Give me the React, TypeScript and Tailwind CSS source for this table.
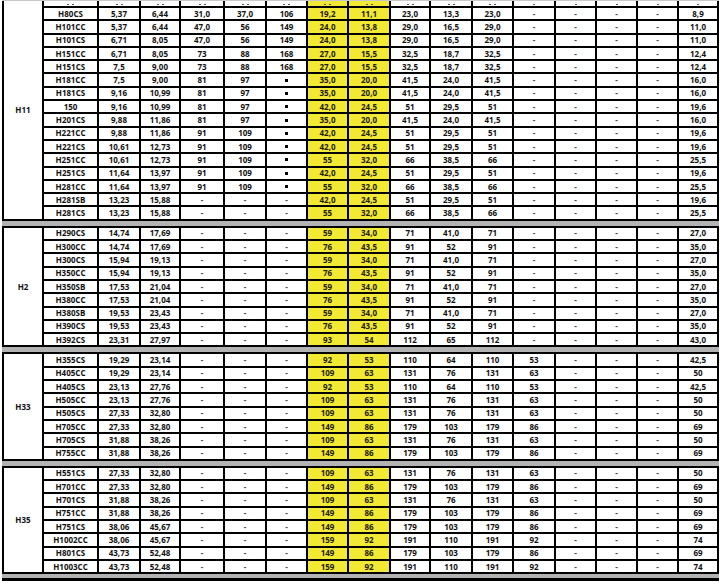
import React from 'react';

// cell widths of the data columns (model first), group column is 38px
const colW = [
  'w-[53px]', 'w-[40px]', 'w-[38px]', 'w-[42px]', 'w-[40px]', 'w-[39px]', 'w-[39px]', 'w-[40px]',
  'w-[38px]', 'w-[40px]', 'w-[39px]', 'w-[40px]', 'w-[39px]', 'w-[39px]', 'w-[39px]', 'w-[38px]',
];

type Row = string[];

const r = (s: string): Row => s.split(' ');

const sections: { name: string; rows: Row[] }[] = [
  {
    name: 'H11',
    rows: [
      r('H80CS 5,37 6,44 31,0 37,0 106 19,2 11,1 23,0 13,3 23,0 - - - - 8,9'),
      r('H101CC 5,37 6,44 47,0 56 149 24,0 13,8 29,0 16,5 29,0 - - - - 11,0'),
      r('H101CS 6,71 8,05 47,0 56 149 24,0 13,8 29,0 16,5 29,0 - - - - 11,0'),
      r('H151CC 6,71 8,05 73 88 168 27,0 15,5 32,5 18,7 32,5 - - - - 12,4'),
      r('H151CS 7,5 9,00 73 88 168 27,0 15,5 32,5 18,7 32,5 - - - - 12,4'),
      r('H181CC 7,5 9,00 81 97 = 35,0 20,0 41,5 24,0 41,5 - - - - 16,0'),
      r('H181CS 9,16 10,99 81 97 = 35,0 20,0 41,5 24,0 41,5 - - - - 16,0'),
      r('150 9,16 10,99 81 97 = 42,0 24,5 51 29,5 51 - - - - 19,6'),
      r('H201CS 9,88 11,86 81 97 = 35,0 20,0 41,5 24,0 41,5 - - - - 16,0'),
      r('H221CC 9,88 11,86 91 109 = 42,0 24,5 51 29,5 51 - - - - 19,6'),
      r('H221CS 10,61 12,73 91 109 = 42,0 24,5 51 29,5 51 - - - - 19,6'),
      r('H251CC 10,61 12,73 91 109 = 55 32,0 66 38,5 66 - - - - 25,5'),
      r('H251CS 11,64 13,97 91 109 = 42,0 24,5 51 29,5 51 - - - - 19,6'),
      r('H281CC 11,64 13,97 91 109 = 55 32,0 66 38,5 66 - - - - 25,5'),
      r('H281SB 13,23 15,88 - - - 42,0 24,5 51 29,5 51 - - - - 19,6'),
      r('H281CS 13,23 15,88 - - - 55 32,0 66 38,5 66 - - - - 25,5'),
    ],
  },
  {
    name: 'H2',
    rows: [
      r('H290CS 14,74 17,69 - - - 59 34,0 71 41,0 71 - - - - 27,0'),
      r('H300CC 14,74 17,69 - - - 76 43,5 91 52 91 - - - - 35,0'),
      r('H300CS 15,94 19,13 - - - 59 34,0 71 41,0 71 - - - - 27,0'),
      r('H350CC 15,94 19,13 - - - 76 43,5 91 52 91 - - - - 35,0'),
      r('H350SB 17,53 21,04 - - - 59 34,0 71 41,0 71 - - - - 27,0'),
      r('H380CC 17,53 21,04 - - - 76 43,5 91 52 91 - - - - 35,0'),
      r('H380SB 19,53 23,43 - - - 59 34,0 71 41,0 71 - - - - 27,0'),
      r('H390CS 19,53 23,43 - - - 76 43,5 91 52 91 - - - - 35,0'),
      r('H392CS 23,31 27,97 - - - 93 54 112 65 112 - - - - 43,0'),
    ],
  },
  {
    name: 'H33',
    rows: [
      r('H355CS 19,29 23,14 - - - 92 53 110 64 110 53 - - - 42,5'),
      r('H405CC 19,29 23,14 - - - 109 63 131 76 131 63 - - - 50'),
      r('H405CS 23,13 27,76 - - - 92 53 110 64 110 53 - - - 42,5'),
      r('H505CC 23,13 27,76 - - - 109 63 131 76 131 63 - - - 50'),
      r('H505CS 27,33 32,80 - - - 109 63 131 76 131 63 - - - 50'),
      r('H705CC 27,33 32,80 - - - 149 86 179 103 179 86 - - - 69'),
      r('H705CS 31,88 38,26 - - - 109 63 131 76 131 63 - - - 50'),
      r('H755CC 31,88 38,26 - - - 149 86 179 103 179 86 - - - 69'),
    ],
  },
  {
    name: 'H35',
    rows: [
      r('H551CS 27,33 32,80 - - - 109 63 131 76 131 63 - - - 50'),
      r('H701CC 27,33 32,80 - - - 149 86 179 103 179 86 - - - 69'),
      r('H701CS 31,88 38,26 - - - 109 63 131 76 131 63 - - - 50'),
      r('H751CC 31,88 38,26 - - - 149 86 179 103 179 86 - - - 69'),
      r('H751CS 38,06 45,67 - - - 149 86 179 103 179 86 - - - 69'),
      r('H1002CC 38,06 45,67 - - - 159 92 191 110 191 92 - - - 74'),
      r('H801CS 43,73 52,48 - - - 149 86 179 103 179 86 - - - 69'),
      r('H1003CC 43,73 52,48 - - - 159 92 191 110 191 92 - - - 74'),
    ],
  },
];

function Cell({ v, i }: { v: string; i: number }) {
  const yellow = i === 6 || i === 7;
  return (
    <div
      className={`${colW[i]} shrink-0 flex items-center justify-center ${
        yellow ? 'bg-[#f1e934] text-[#222000]' : 'bg-white text-[#111]'
      }`}
    >
      {v === '=' ? (
        <span className="inline-block w-[3px] h-[3px] bg-black" />
      ) : v === '-' ? (
        <span className="text-[#4a4a4a]">-</span>
      ) : (
        v
      )}
    </div>
  );
}

function DataRow({ row }: { row: Row }) {
  return (
    <div className="flex gap-[2px] h-[11.3px]">
      {row.map((v, i) => (
        <Cell key={i} v={v} i={i} />
      ))}
    </div>
  );
}

// the row cut off at the top edge: only the feet of its glyphs show
function TopRow() {
  return (
    <div className="flex gap-[2px] h-[5px]">
      {colW.map((w, i) => (
        <div
          key={i}
          className={`${w} shrink-0 flex items-end justify-center gap-[3px] pb-[1px] ${
            i === 6 || i === 7 ? 'bg-[#f1e934]' : 'bg-white'
          }`}
        >
          <span className="w-[2px] h-[1px] bg-[#555]" />
          {i < 11 && <span className="w-[2px] h-[1px] bg-[#555]" />}
        </div>
      ))}
    </div>
  );
}

function Section({ name, rows, first }: { name: string; rows: Row[]; first?: boolean }) {
  return (
    <div className={`flex gap-[2px] bg-black px-[2px] pb-[2px] ${first ? 'pt-0' : 'pt-[2px]'}`}>
      <div className="w-[38px] shrink-0 bg-white flex items-center justify-center text-[#111]">
        {name}
      </div>
      <div className="flex flex-col gap-[2px]">
        {first && <TopRow />}
        {rows.map((row, i) => (
          <DataRow key={i} row={row} />
        ))}
      </div>
    </div>
  );
}

export default function App() {
  return (
    <div className="w-[725px] h-[585px] overflow-hidden bg-white pl-[2px] font-['Open_Sans',sans-serif] font-bold text-[8px] leading-none">
      <div className="w-[717px] flex flex-col">
        <div className="h-px bg-[#c9c9c9]" />
        {sections.map((s, i) => (
          <React.Fragment key={s.name}>
            {i > 0 && <div className="h-[5px] bg-[#b3b3b3]" />}
            <Section name={s.name} rows={s.rows} first={i === 0} />
          </React.Fragment>
        ))}
        <div className="h-[4px] bg-[#b3b3b3]" />
        <div className="h-[3px] bg-black" />
      </div>
    </div>
  );
}
